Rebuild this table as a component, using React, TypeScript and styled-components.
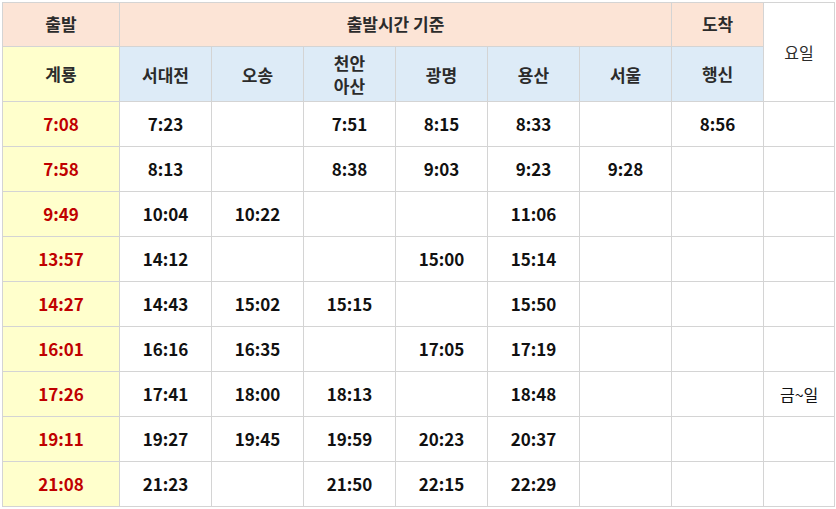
import styled, { createGlobalStyle } from 'styled-components';

const GlobalStyle = createGlobalStyle`
  html, body {
    margin: 0;
    padding: 0;
    background: #ffffff;
  }
  body {
    font-family: "Noto Sans CJK KR", "Noto Sans", sans-serif;
  }
`;

const Wrapper = styled.div`
  padding: 2px 0 0 2px;
`;

const Table = styled.table`
  border-collapse: collapse;
  table-layout: fixed;
  width: 833px;
`;

const Cell = styled.td<{ $bg?: string; $color?: string; $light?: boolean }>`
  border: 1px solid #d4d4d4;
  background: ${(p) => p.$bg ?? '#ffffff'};
  color: ${(p) => p.$color ?? '#111111'};
  font-weight: ${(p) => (p.$light ? 400 : 700)};
  font-size: ${(p) => (p.$light ? '16px' : '17px')};
  text-align: center;
  vertical-align: middle;
  padding: 0;
  line-height: 1.3;
`;

const Head = styled(Cell)`
  color: #2b2b2b;
`;

const HeadLine = styled.div`
  line-height: 23px;
`;

const HeadRow = styled.tr<{ $h: number }>`
  height: ${(p) => p.$h}px;
`;

const BodyRow = styled.tr`
  height: 45px;
`;

const PEACH = '#fce4d6';
const BLUE = '#ddebf7';
const YELLOW = '#ffffcc';
const RED = '#c00000';

const stations = ['서대전', '오송', '천안\n아산', '광명', '용산', '서울'];

const rows: { dep: string; stops: string[]; day?: string }[] = [
  { dep: '7:08', stops: ['7:23', '', '7:51', '8:15', '8:33', '', '8:56'] },
  { dep: '7:58', stops: ['8:13', '', '8:38', '9:03', '9:23', '9:28', ''] },
  { dep: '9:49', stops: ['10:04', '10:22', '', '', '11:06', '', ''] },
  { dep: '13:57', stops: ['14:12', '', '', '15:00', '15:14', '', ''] },
  { dep: '14:27', stops: ['14:43', '15:02', '15:15', '', '15:50', '', ''] },
  { dep: '16:01', stops: ['16:16', '16:35', '', '17:05', '17:19', '', ''] },
  { dep: '17:26', stops: ['17:41', '18:00', '18:13', '', '18:48', '', ''], day: '금~일' },
  { dep: '19:11', stops: ['19:27', '19:45', '19:59', '20:23', '20:37', '', ''] },
  { dep: '21:08', stops: ['21:23', '', '21:50', '22:15', '22:29', '', ''] },
];

export default function App() {
  return (
    <>
      <GlobalStyle />
      <Wrapper>
        <Table>
          <colgroup>
            <col style={{ width: 117 }} />
            {Array.from({ length: 7 }).map((_, i) => (
              <col key={i} style={{ width: 92 }} />
            ))}
            <col style={{ width: 71 }} />
          </colgroup>
          <thead>
            <HeadRow $h={44}>
              <Head as="th" $bg={PEACH}>출발</Head>
              <Head as="th" $bg={PEACH} colSpan={6}>출발시간 기준</Head>
              <Head as="th" $bg={PEACH}>도착</Head>
              <Head as="th" rowSpan={2} $light>요일</Head>
            </HeadRow>
            <HeadRow $h={55}>
              <Head as="th" $bg={YELLOW} $color="#111111">계룡</Head>
              {stations.map((s) => (
                <Head as="th" key={s} $bg={BLUE}>
                  {s.split('\n').map((line, i) => (
                    <HeadLine key={i}>{line}</HeadLine>
                  ))}
                </Head>
              ))}
              <Head as="th" $bg={BLUE}>행신</Head>
            </HeadRow>
          </thead>
          <tbody>
            {rows.map((r) => (
              <BodyRow key={r.dep}>
                <Cell $bg={YELLOW} $color={RED}>{r.dep}</Cell>
                {r.stops.map((t, i) => (
                  <Cell key={i}>{t}</Cell>
                ))}
                <Cell $light>{r.day ?? ''}</Cell>
              </BodyRow>
            ))}
          </tbody>
        </Table>
      </Wrapper>
    </>
  );
}
